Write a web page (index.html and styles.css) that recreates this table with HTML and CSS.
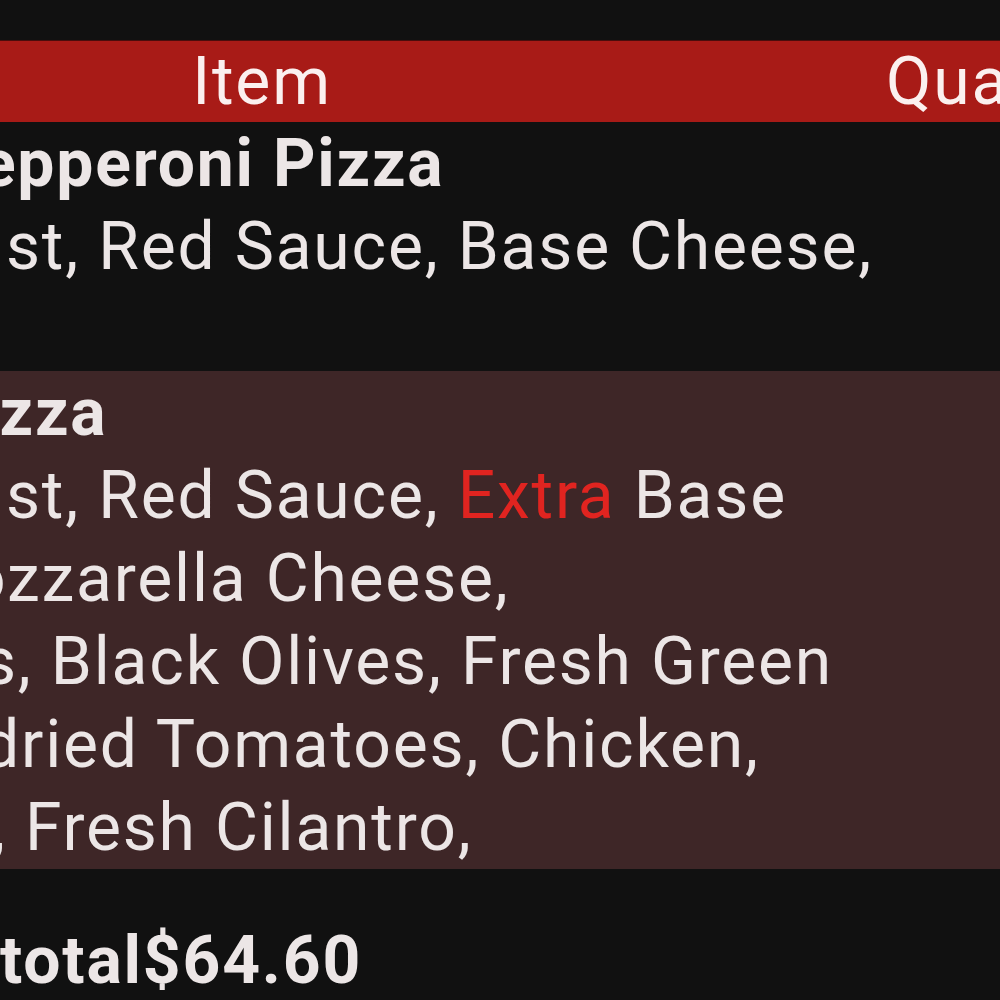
FILE: index.html
```html
<!DOCTYPE html>
<html lang="en">
<head>
    <meta charset="UTF-8">
    <meta name="viewport" content="width=device-width, initial-scale=1.0">
    <title>Order Summary</title>
    <link rel="stylesheet" href="styles.css">
</head>
<body>
    <div class="order">
        <div class="order-head">
            <div class="col-item">Item</div>
            <div class="col-qty">Quantity</div>
        </div>
        <div class="order-row">
            <div class="col-item">
                <div class="item-name">Pepperoni Pizza</div>
                <div class="item-desc">
                    <div>st, Red Sauce, Base Cheese,</div>
                    <div>&nbsp;</div>
                </div>
            </div>
        </div>
        <div class="order-row alt">
            <div class="col-item">
                <div class="item-name">Pizza</div>
                <div class="item-desc">
                    <div>st, Red Sauce, <span class="extra">Extra</span> Base</div>
                    <div class="cut deep">ozzarella Cheese,</div>
                    <div class="cut">s, Black Olives, Fresh Green</div>
                    <div class="cut">dried Tomatoes, Chicken,</div>
                    <div class="cut soft">, Fresh Cilantro,</div>
                </div>
            </div>
        </div>
        <div class="order-total">
            <span>total</span><span>$64.60</span>
        </div>
    </div>
</body>
</html>
```

FILE: styles.css
```css
html, body{
    margin: 0;
    overflow: hidden;
}
body{
    background-color: #111111;
    color: #ece6e6;
    font-family: Roboto, "Liberation Sans", sans-serif;
    font-size: 66px;
    line-height: 83px;
    letter-spacing: 1.8px;
}
.order{
    width: 1490px;
    margin-left: -346px;
    padding-top: 40px;
    white-space: nowrap;
}
.order-head{
    display: grid;
    grid-template-columns: 1216px 274px;
    background-color: #a81b17;
    border-top: 1px solid #4a0d0c;
    color: #fbf0ef;
    text-align: center;
    line-height: 81px;
}
.order-head .col-qty{
    padding-left: 16px;
}
.order-row{
    display: grid;
    grid-template-columns: 1216px 274px;
}
.order-row .col-item{
    padding-left: 352px;
}
.order-row.alt{
    background-color: #3e2627;
}
.item-name{
    margin-left: -70px;
    font-weight: bold;
}
.item-desc .cut{
    margin-left: -24px;
}
.item-desc .cut.deep{
    margin-left: -38px;
}
.item-desc .cut.soft{
    margin-left: -14px;
}
.extra{
    color: #e02420;
}
.order-total{
    padding: 50px 0 0 346px;
    font-weight: bold;
}
```
